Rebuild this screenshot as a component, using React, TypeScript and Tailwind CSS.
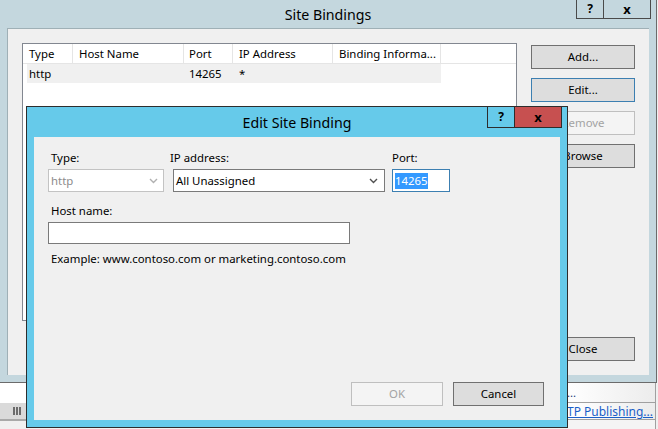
import React from "react";

const Chevron = ({ color }: { color: string }) => (
  <svg width="9" height="6" viewBox="0 0 9 6" className="shrink-0">
    <polyline points="1,1 4.5,4.5 8,1" fill="none" stroke={color} strokeWidth="1.4" />
  </svg>
);

const WinButton = ({
  children,
  variant = "normal",
  className = "",
}: {
  children: React.ReactNode;
  variant?: "normal" | "focus" | "disabled";
  className?: string;
}) => {
  const styles =
    variant === "disabled"
      ? "border-[#bfbfbf] bg-[#f4f4f4] text-[#a3a3a3]"
      : variant === "focus"
      ? "border-[#3c7fb1] bg-[#dddddd] text-black"
      : "border-[#707070] bg-[#dddddd] text-black";
  return (
    <div className={`flex h-[24px] items-center justify-center whitespace-nowrap border ${styles} ${className}`}>
      {children}
    </div>
  );
};

export default function App() {
  return (
    <div className="relative h-[429px] w-[658px] overflow-hidden bg-[#f0f0f0] font-['Noto_Sans',sans-serif] text-[11.4px] leading-[16px] text-black">
      {/* Underlying desktop / IIS manager */}
      <div className="flex h-full flex-col">
        <div className="h-[383px] shrink-0" />
        <div className="flex flex-1">
          <div className="flex w-[567px] flex-col">
            <div className="h-[20px] bg-white" />
            <div className="flex h-[16px] items-center gap-[1px] bg-[#dadada] pl-[13px]">
              <div className="h-[8px] w-[2px] bg-[#6b6b6b]" />
              <div className="h-[8px] w-[2px] bg-[#6b6b6b]" />
              <div className="h-[8px] w-[2px] bg-[#6b6b6b]" />
            </div>
            <div className="h-[2px] bg-[#a9a9a9]" />
            <div className="flex-1 bg-[#f0f0f0]" />
          </div>
          <div className="flex w-[89px] flex-col border-r border-[#a0a0a0]">
            <div className="flex h-[19px] items-center bg-gradient-to-r from-white to-[#ececec] text-[#1f3f7a]">
              ...
            </div>
            <div className="flex h-[17px] items-end overflow-hidden whitespace-nowrap border-t border-[#a0a0a0] bg-gradient-to-r from-white to-[#ececec] text-[12px] leading-[14px] text-[#1a5fc8] underline">
              TP Publishing...
            </div>
            <div className="flex-1 border-t border-[#a0a0a0] bg-[#f4f4f4]" />
          </div>
          <div className="flex-1 bg-[#f0f0f0]" />
        </div>
      </div>

      {/* Site Bindings window */}
      <div className="absolute left-0 top-0 flex h-[383px] w-[657px] flex-col border-b border-r border-[#6b6b6b] bg-[#c4d7de]">
        <div className="relative flex h-[28px] shrink-0 items-center justify-center pt-[1px] text-[14.2px] leading-[20px]">
          Site Bindings
          <div className="absolute right-[5px] top-0 flex h-[19px]">
            <div className="flex w-[28px] items-center justify-center border border-t-0 border-[#4a4a4a] text-[12px] font-bold leading-none">
              ?
            </div>
            <div className="flex w-[47px] items-center justify-center border border-l-0 border-t-0 border-[#4a4a4a] text-[13px] font-bold leading-none">
              x
            </div>
          </div>
        </div>
        <div className="mb-[7px] ml-[7px] mr-[7px] flex flex-1 border-l border-t border-[#9fb0b6] bg-[#f0f0f0] pl-[14px] pt-[14px]">
          {/* List view */}
          <div className="flex h-[278px] w-[495px] flex-col border border-[#828790] bg-white">
            <div className="flex h-[20px] whitespace-nowrap border-b border-[#e5e5e5]">
              <div className="flex w-[50px] items-center border-r border-[#e5e5e5] pl-[6px]">Type</div>
              <div className="flex w-[111px] items-center border-r border-[#e5e5e5] pl-[6px]">Host Name</div>
              <div className="flex w-[49px] items-center border-r border-[#e5e5e5] pl-[5px]">Port</div>
              <div className="flex w-[100px] items-center border-r border-[#e5e5e5] pl-[6px]">IP Address</div>
              <div className="flex w-[108px] items-center border-r border-[#e5e5e5] pl-[6px]">Binding Informa...</div>
            </div>
            <div className="ml-[4px] flex h-[19px] w-[414px] bg-[#f0f0f0]">
              <div className="flex w-[46px] items-center pl-[2px]">http</div>
              <div className="w-[111px]" />
              <div className="flex w-[49px] items-center pl-[5px]">14265</div>
              <div className="flex w-[100px] items-center pl-[6px]">*</div>
            </div>
          </div>
          {/* Buttons */}
          <div className="ml-[14px] flex w-[104px] flex-col gap-[9px] pb-[14px] pt-[2px]">
            <WinButton>Add...</WinButton>
            <WinButton variant="focus">Edit...</WinButton>
            <WinButton variant="disabled">Remove</WinButton>
            <WinButton>Browse</WinButton>
            <div className="flex-1" />
            <WinButton>Close</WinButton>
          </div>
        </div>
      </div>

      {/* Edit Site Binding dialog */}
      <div className="absolute left-[26px] top-[106px] flex h-[322px] w-[542px] flex-col border border-[#2d2d2d] bg-[#66caea]">
        <div className="relative flex h-[30px] shrink-0 items-center justify-center pt-[1px] text-[14.2px] leading-[20px]">
          Edit Site Binding
          <div className="absolute right-[5px] top-0 flex h-[21px]">
            <div className="flex w-[28px] items-center justify-center border border-t-0 border-[#2d2d2d] text-[12px] font-bold leading-none">
              ?
            </div>
            <div className="flex w-[47px] items-center justify-center border border-l-0 border-t-0 border-[#2d2d2d] bg-[#c75050] text-[13px] font-bold leading-none">
              x
            </div>
          </div>
        </div>
        <div className="mb-[7px] ml-[7px] mr-[7px] flex flex-1 flex-col bg-[#f0f0f0] pl-[14px] pt-[13px]">
          <div className="flex items-start">
            <div className="flex w-[116px] flex-col gap-[3px]">
              <div className="pl-[3px]">Type:</div>
              <div className="flex h-[23px] items-center justify-between border border-[#c3c3c3] bg-white pl-[2px] pr-[5px] text-[#8c8c8c]">
                http
                <Chevron color="#b0b0b0" />
              </div>
            </div>
            <div className="ml-[9px] flex w-[212px] flex-col gap-[3px]">
              <div className="-ml-[3px]">IP address:</div>
              <div className="flex h-[23px] items-center justify-between border border-[#7a7a7a] bg-white pl-[2px] pr-[6px]">
                All Unassigned
                <Chevron color="#505050" />
              </div>
            </div>
            <div className="ml-[7px] flex w-[58px] flex-col gap-[3px]">
              <div>Port:</div>
              <div className="flex h-[23px] items-center border border-[#3c7fb1] bg-white pl-[2px]">
                <span className="bg-[#3399ff] text-white">14265</span>
              </div>
            </div>
          </div>
          <div className="mt-[11px] pl-[3px]">Host name:</div>
          <div className="mt-[3px] h-[22px] w-[302px] border border-[#7a7a7a] bg-white" />
          <div className="mt-[7px] pl-[3px]">Example: www.contoso.com or marketing.contoso.com</div>
          <div className="flex-1" />
          <div className="flex justify-end gap-[10px] pb-[14px] pr-[16px]">
            <WinButton variant="disabled" className="w-[92px]">OK</WinButton>
            <WinButton className="w-[91px]">Cancel</WinButton>
          </div>
        </div>
      </div>
    </div>
  );
}
